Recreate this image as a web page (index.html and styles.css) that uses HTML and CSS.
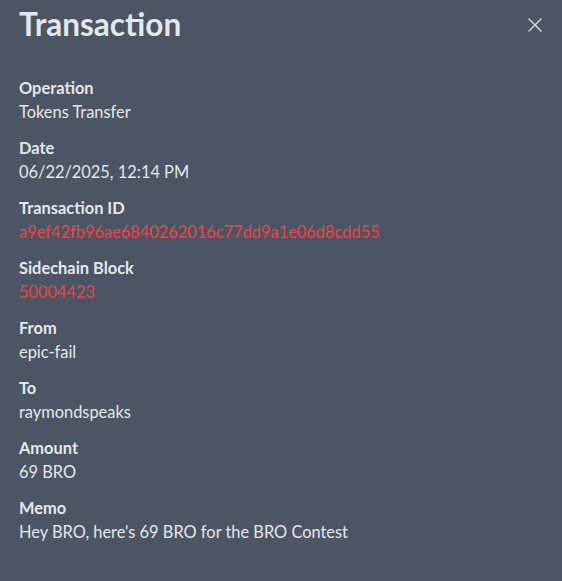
FILE: index.html
```html
<!DOCTYPE html>
<html lang="en">
<head>
<meta charset="utf-8">
<title>Transaction</title>
<link rel="stylesheet" href="styles.css">
</head>
<body>
<div class="modal">
  <header class="modal-header">
    <h1 class="title">Transaction</h1>
    <button class="close" aria-label="Close">
      <svg width="14" height="14" viewBox="0 0 14 14"><path d="M1 1L13 13M13 1L1 13" stroke="#d1d5db" stroke-width="1.5" stroke-linecap="round"/></svg>
    </button>
  </header>
  <dl class="details">
    <div class="row"><dt>Operation</dt><dd>Tokens Transfer</dd></div>
    <div class="row"><dt>Date</dt><dd>06/22/2025, 12:14 PM</dd></div>
    <div class="row"><dt>Transaction ID</dt><dd class="link">a9ef42fb96ae6840262016c77dd9a1e06d8cdd55</dd></div>
    <div class="row"><dt>Sidechain Block</dt><dd class="link">50004423</dd></div>
    <div class="row"><dt>From</dt><dd>epic-fail</dd></div>
    <div class="row"><dt>To</dt><dd>raymondspeaks</dd></div>
    <div class="row"><dt>Amount</dt><dd>69 BRO</dd></div>
    <div class="row"><dt>Memo</dt><dd>Hey BRO, here's 69 BRO for the BRO Contest</dd></div>
  </dl>
</div>
</body>
</html>
```
FILE: styles.css
```css
html, body {
  margin: 0;
  padding: 0;
  height: 100%;
  background: #4b5563;
}
body {
  font-family: Lato, "Open Sans", sans-serif;
  color: #e5e7eb;
}
.modal {
  padding: 4px 19px 0 19px;
}
.modal-header {
  display: flex;
  justify-content: space-between;
  align-items: flex-start;
}
.title {
  margin: 0;
  font-size: 31.5px;
  line-height: 40px;
  font-weight: 700;
  color: #e5e7eb;
}
.close {
  background: none;
  border: 0;
  padding: 0;
  margin: 14px 1px 0 0;
  width: 14px;
  height: 14px;
  display: flex;
}
.details {
  margin: 32px 0 0 0;
  display: flex;
  flex-direction: column;
  gap: 12px;
}
.row dt {
  font-weight: 700;
  font-size: 16.4px;
  line-height: 24px;
}
.row dd {
  margin: 0;
  font-size: 16.4px;
  line-height: 24px;
  color: #e5e7eb;
}
.row dd.link {
  color: #ef4444;
}
```
